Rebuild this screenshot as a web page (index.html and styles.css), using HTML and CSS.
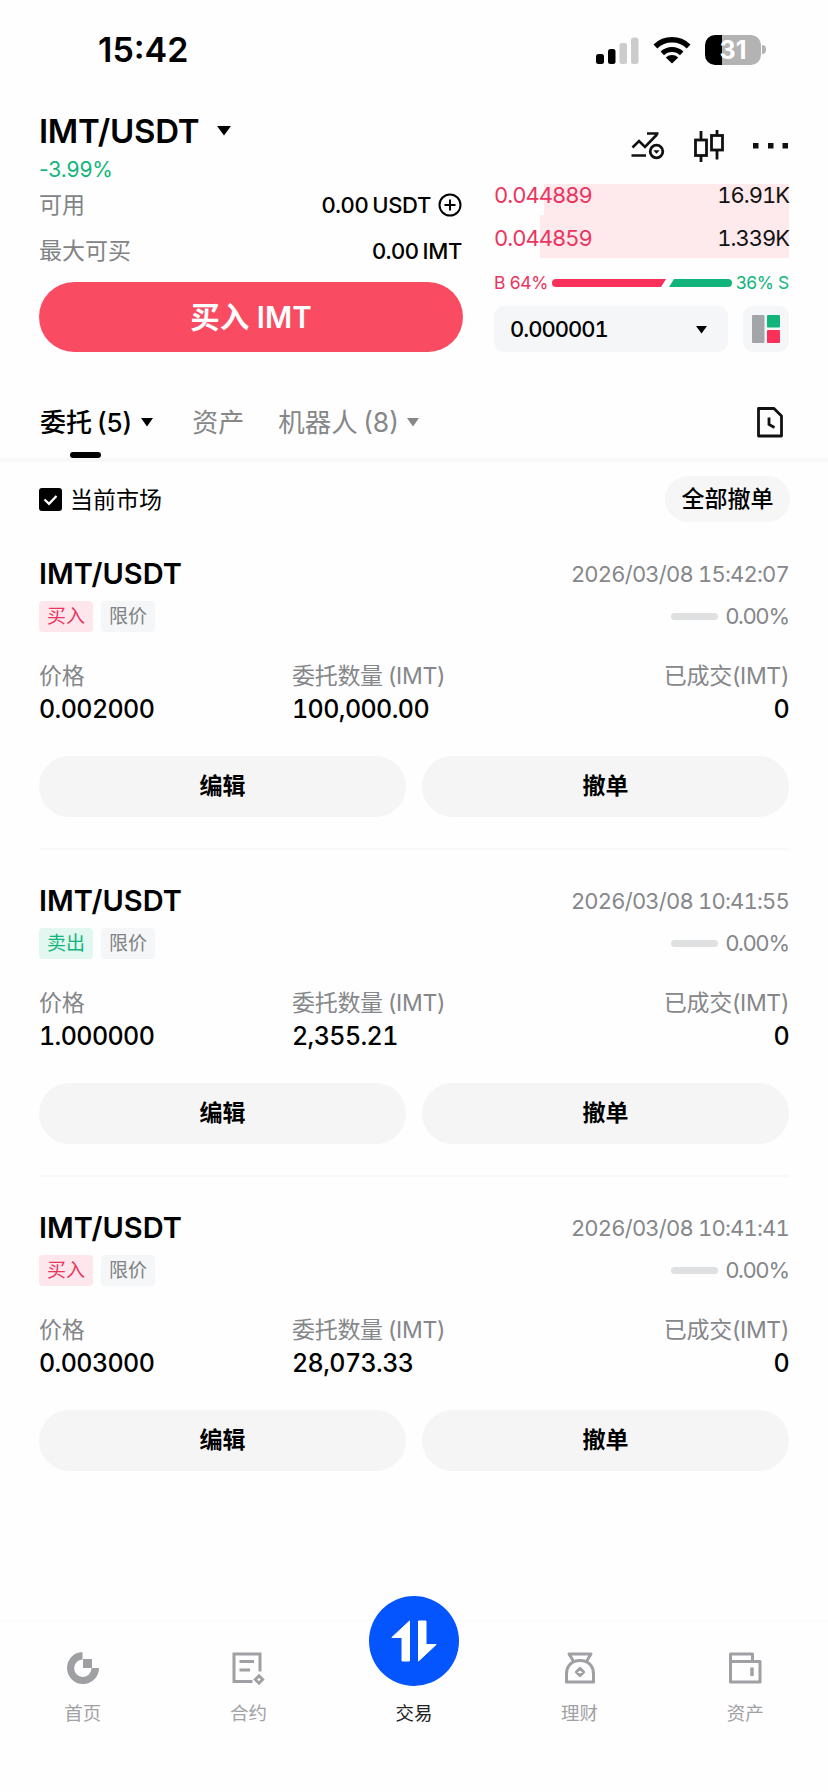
FILE: index.html
```html
<!DOCTYPE html>
<html lang="zh-CN">
<head>
<meta charset="utf-8">
<title>IMT/USDT</title>
<link rel="stylesheet" href="styles.css">
</head>
<body>
<div class="app">
  <header class="status">
    <span class="clock">15:42</span>
    <div class="status-icons">
      <svg width="43" height="28" viewBox="0 0 43 28"><rect x="0" y="18" width="8" height="10" rx="2.5"/><rect x="12" y="13" width="7.5" height="15" rx="2.5"/><g fill="#ccc"><rect x="23.500" y="7" width="7.500" height="21" rx="2.500"/><rect x="35" y="1.500" width="7.500" height="26.500" rx="2.500"/></g></svg>
      <svg class="wifi" width="38" height="28" viewBox="0 0 38 28"><path d="M19 27.500 12.800 21.400a9 9 0 0 1 12.400 0z"/><path d="M9.300 17.400a14 14 0 0 1 19.400 0" fill="none" stroke="#000" stroke-width="5"/><path d="M2.400 10.400a24 24 0 0 1 33.200 0" fill="none" stroke="#000" stroke-width="5.500"/></svg>
      <div class="battery"><span>31</span></div><i class="battery-tip"></i>
    </div>
  </header>

  <section class="head">
    <div class="head-left">
      <h1 class="pair">IMT/USDT<svg width="14" height="10" viewBox="0 0 14 10"><path d="M0 0H14L7 9.500z"/></svg></h1>
      <div class="change">-3.99%</div>
    </div>
    <div class="head-icons">
      <svg width="34" height="28" viewBox="0 0 34 28" fill="none" stroke="#111" stroke-width="2.600"><path d="M1.500 15.500 8 9l6 6L26 2.500M16 1.500H27.500M.5 23.500H15"/><circle cx="25.500" cy="19.500" r="6.300" stroke-width="2.800"/><path d="M22.300 18.200h6.400l-3.200 3.600z" fill="#111" stroke="none"/></svg>
      <svg class="candles" width="30" height="34" viewBox="0 0 30 34" fill="none" stroke="#111" stroke-width="2.800"><path d="M7 2v9M7 27v6M23 1v6M23 21v9.500"/><rect x="1.500" y="11" width="11" height="15.500"/><rect x="17.500" y="6.500" width="11" height="14.500"/></svg>
      <svg width="36" height="6" viewBox="0 0 36 6" fill="#111"><rect x="0" y="0" width="5.500" height="5.500"/><rect x="15" y="0" width="5.500" height="5.500"/><rect x="29.500" y="0" width="5.500" height="5.500"/></svg>
    </div>
  </section>

  <section class="trade">
    <div class="order-form">
      <div class="kv avail"><span>可用</span><b>0.00 USDT<svg width="24" height="24" viewBox="0 0 24 24" fill="none" stroke="#000" stroke-width="2"><circle cx="12" cy="12" r="10.500"/><path d="M12 6.500v11M6.500 12h11"/></svg></b></div>
      <div class="kv max"><span>最大可买</span><b>0.00 IMT</b></div>
      <button class="buy">买入 IMT</button>
    </div>
    <div class="book">
      <div class="ask ask-1"><span>0.044889</span><b>16.91K</b></div>
      <div class="ask ask-2"><span>0.044859</span><b>1.339K</b></div>
      <div class="ratio"><span class="red">B 64%</span><svg width="180" height="8" viewBox="0 0 180 8"><path fill="#f8305a" d="M4 0H114L109 8H4A4 4 0 0 1 4 0z"/><path fill="#11b57c" d="M122 0H176A4 4 0 0 1 176 8H117z"/></svg><span class="green">36% S</span></div>
      <div class="controls">
        <div class="step">0.000001<svg width="11" height="8" viewBox="0 0 11 8"><path d="M0 0H11L5.500 7.500z"/></svg></div>
        <div class="layout"><svg width="28" height="28" viewBox="0 0 28 28"><rect width="12.500" height="28" rx="1" fill="#a3a5a8"/><rect x="15" width="13" height="12.500" rx="1" fill="#11b57c"/><rect x="15" y="15" width="13" height="13" rx="1" fill="#f8305a"/></svg></div>
      </div>
    </div>
  </section>

  <nav class="tabs">
    <div class="tab active">委托 (5)<svg width="12" height="9" viewBox="0 0 12 9"><path d="M0 0H12L6 8.500z"/></svg></div>
    <div class="tab assets">资产</div>
    <div class="tab bots">机器人 (8)<svg width="12" height="9" viewBox="0 0 12 9"><path fill="#858789" d="M0 0H12L6 8.500z"/></svg></div>
    <svg class="history" width="26" height="31" viewBox="0 0 26 31" fill="none" stroke="#111" stroke-width="2.800"><path d="M1.500 1.500H17L24.500 9V29H1.500z" stroke-linejoin="round"/><path d="M12 10.500V17.500L17.500 20.500"/></svg>
  </nav>

  <div class="filter">
    <div class="check"><svg width="23" height="23" viewBox="0 0 23 23"><rect width="23" height="23" rx="3"/><path d="M5.500 11.500 10 15.800 17.500 8" fill="none" stroke="#fff" stroke-width="2.300"/></svg><span>当前市场</span></div>
    <button class="cancel-all">全部撤单</button>
  </div>

  <main>
    <article class="order">
      <div class="row top"><h2>IMT/USDT</h2><time>2026/03/08 15:42:07</time></div>
      <div class="row meta"><div class="tags"><span class="tag buy-tag">买入</span><span class="tag">限价</span></div><div class="progress"><i></i>0.00%</div></div>
      <div class="row stats"><div><span>价格</span><b>0.002000</b></div><div><span>委托数量 (IMT)</span><b>100,000.00</b></div><div><span>已成交(IMT)</span><b>0</b></div></div>
      <div class="row actions"><button>编辑</button><button>撤单</button></div>
    </article>
    <article class="order">
      <div class="row top"><h2>IMT/USDT</h2><time>2026/03/08 10:41:55</time></div>
      <div class="row meta"><div class="tags"><span class="tag sell-tag">卖出</span><span class="tag">限价</span></div><div class="progress"><i></i>0.00%</div></div>
      <div class="row stats"><div><span>价格</span><b>1.000000</b></div><div><span>委托数量 (IMT)</span><b>2,355.21</b></div><div><span>已成交(IMT)</span><b>0</b></div></div>
      <div class="row actions"><button>编辑</button><button>撤单</button></div>
    </article>
    <article class="order">
      <div class="row top"><h2>IMT/USDT</h2><time>2026/03/08 10:41:41</time></div>
      <div class="row meta"><div class="tags"><span class="tag buy-tag">买入</span><span class="tag">限价</span></div><div class="progress"><i></i>0.00%</div></div>
      <div class="row stats"><div><span>价格</span><b>0.003000</b></div><div><span>委托数量 (IMT)</span><b>28,073.33</b></div><div><span>已成交(IMT)</span><b>0</b></div></div>
      <div class="row actions"><button>编辑</button><button>撤单</button></div>
    </article>
  </main>

  <nav class="bottom">
    <div class="item"><svg width="34" height="34" viewBox="0 0 34 34"><path fill="#9fa0a3" d="M16.500 1V8.500A8.700 8.700 0 1 0 25.500 17H33A16 16 0 1 1 16.500 1z"/><rect x="17" y="8" width="9" height="9" fill="#9fa0a3"/></svg><span>首页</span></div>
    <div class="item"><svg width="34" height="34" viewBox="0 0 34 34" fill="none" stroke="#9fa0a3" stroke-width="3"><path d="M29 20.500V3H3V30.500H21.500M8.500 10.500H23M8.500 19H19"/><path d="M28 24.800 31.700 28.500 28 32.200 24.300 28.500z" stroke-width="2.800"/></svg><span>合约</span></div>
    <div class="item current"><div class="fab"><svg width="46" height="42" viewBox="0 0 46 42" fill="#fff" stroke="#fff" stroke-linejoin="round"><path d="M18.500 1V41H11V17.500H.800z"/><path d="M27.500 41V1H35V24.500H45.200z"/></svg></div><span>交易</span></div>
    <div class="item"><svg width="34" height="34" viewBox="0 0 34 34" fill="none" stroke="#9fa0a3" stroke-width="3" stroke-linejoin="round"><path d="M10 9.500 6 3H28L24 9.500M3.500 31V23C3.500 14.500 9 9.500 17 9.500S30.500 14.500 30.500 23V31z"/><path d="M17 17.300 20.700 21 17 24.700 13.300 21z" stroke-width="2.800"/></svg><span>理财</span></div>
    <div class="item"><svg width="34" height="34" viewBox="0 0 34 34" fill="none" stroke="#9fa0a3" stroke-width="3" stroke-linejoin="round"><path d="M2.500 10.500V3H24.500V10.500M2.500 10.500H32V31H2.500z"/><path d="M24 16.500V25" stroke-width="3.500"/></svg><span>资产</span></div>
  </nav>
</div>
</body>
</html>
```
FILE: styles.css
```css
* { box-sizing: border-box; margin: 0; padding: 0; }
body { background: #fefefe; font-family: Inter, "Noto Sans CJK SC", sans-serif; color: #000; }
svg { display: block; flex: none; }
button { border: 0; font-family: inherit; color: inherit; }
b { font-weight: 500; }
.app { width: 828px; height: 1792px; display: flex; flex-direction: column; overflow: hidden; }

.status { height: 99px; padding: 0 62px 0 98px; display: flex; justify-content: space-between; align-items: center; }
.clock { font-size: 34px; font-weight: 600; line-height: 40px; }
.status-icons { display: flex; align-items: center; }
.wifi { margin: 0 14px 0 14px; }
.battery { width: 56px; height: 30px; border-radius: 10px; background: linear-gradient(90deg, #000 17px, #b3b3b3 17px); display: flex; justify-content: center; align-items: center; color: #fff; font-size: 25px; font-weight: 700; line-height: 30px; }
.battery-tip { width: 4px; height: 9px; margin-left: 1px; border-radius: 0 5px 5px 0; background: #b3b3b3; }

.head { height: 85px; padding: 10px 39px 0 39px; display: flex; justify-content: space-between; }
.pair { display: flex; align-items: center; gap: 18px; height: 44px; font-size: 33px; font-weight: 600; line-height: 44px; letter-spacing: -0.3px; }
.change { height: 32px; font-size: 21px; line-height: 34px; letter-spacing: -0.1px; color: #11b57c; }
.head-icons { display: flex; align-items: center; gap: 29px; height: 74px; }

.trade { height: 198px; padding: 0 39px; display: flex; justify-content: space-between; }
.order-form { width: 424px; }
.kv { display: flex; justify-content: space-between; align-items: center; padding: 0 1px 0 0; font-size: 23px; color: #818386; }
.kv span { padding-bottom: 4px; }
.kv b { display: flex; align-items: center; gap: 7px; color: #000; font-size: 22px; letter-spacing: -0.35px; word-spacing: -1.5px; }
.avail { height: 41px; }
.max { height: 52px; }
.buy { display: block; width: 424px; height: 70px; margin-top: 5px; border-radius: 35px; background: #f94b61; color: #fff; font-size: 29.500px; font-weight: 600; line-height: 70px; }
.book { width: 295px; }
.ask { display: flex; justify-content: space-between; font-size: 22px; letter-spacing: -1px; font-feature-settings: "tnum"; color: #ea3560; }
.ask b { color: #111; font-weight: 400; }
.ask-1 { height: 31px; line-height: 22px; background: linear-gradient(90deg, transparent 50px, #fee9ed 50px); }
.ask-2 { height: 43px; line-height: 46px; background: linear-gradient(90deg, transparent 46px, #fee9ed 46px); }
.ratio { height: 49px; display: flex; align-items: center; justify-content: space-between; font-size: 17.500px; letter-spacing: -0.35px; }
.red { color: #ea3560; }
.green { color: #11b57c; }
.controls { display: flex; justify-content: space-between; margin-top: -1px; }
.step { width: 234px; height: 46px; padding: 0 21px 0 16px; border-radius: 10px; background: #f5f6f7; display: flex; justify-content: space-between; align-items: center; font-size: 22px; font-weight: 500; letter-spacing: -1px; font-feature-settings: "tnum"; }
.layout { width: 46px; height: 46px; border-radius: 10px; background: #f5f6f7; display: flex; align-items: center; justify-content: center; }
.step svg { margin-top: 1px; }

.tabs { height: 80px; padding: 0 45px 0 40px; display: flex; align-items: center; border-bottom: 4px solid #f8f8f8; font-size: 26px; color: #858789; }
.tab { display: flex; align-items: center; gap: 9px; height: 77px; position: relative; word-spacing: -2px; }
.tab svg { margin-top: 5px; }
.active { color: #000; font-weight: 500; }
.active::after { content: ""; position: absolute; left: 30px; bottom: 1px; width: 31px; height: 6px; border-radius: 3px; background: #000; }
.assets { margin-left: 39px; }
.bots { margin-left: 34px; font-size: 26.500px; gap: 8px; }
.history { margin: 5px 0 0 auto; }

.filter { height: 61px; padding: 14px 38px 0 39px; display: flex; align-items: flex-start; justify-content: space-between; font-size: 23px; }
.check { display: flex; align-items: center; gap: 8px; height: 46px; }
.check span { padding-bottom: 2px; }
.cancel-all { width: 125px; height: 46px; border-radius: 23px; background: #f6f6f6; font-size: 23px; font-weight: 500; line-height: 46px; }

.order { height: 327px; padding-top: 27px; margin: 0 39px; border-bottom: 2px solid #f8f8f8; }
.order:last-child { border-bottom: 0; }
.row { display: flex; justify-content: space-between; }
.top { height: 48px; line-height: 48px; align-items: center; }
.order h2 { font-size: 29px; font-weight: 600; }
.order time { font-size: 22px; letter-spacing: -0.8px; color: #85878a; font-feature-settings: "tnum"; }
.meta { height: 36px; align-items: center; }
.tags { display: flex; gap: 8px; }
.tag { width: 54px; height: 31px; border-radius: 4px; background: #f5f6f7; color: #808285; font-size: 19px; line-height: 31px; text-align: center; }
.buy-tag { background: #fee7ec; color: #ea3560; }
.sell-tag { background: #e2f7ef; color: #11b57c; }
.progress { display: flex; align-items: center; gap: 8px; font-size: 22px; letter-spacing: -1px; color: #85878a; }
.progress i { width: 47px; height: 7px; border-radius: 4px; background: #dfe0e1; }
.stats { height: 66px; margin-top: 26px; display: grid; grid-template-columns: 253px 1fr auto; }
.stats span { display: block; height: 32px; font-size: 23px; line-height: 32px; letter-spacing: -0.3px; word-spacing: -1px; color: #85878a; }
.stats b { display: block; height: 34px; font-size: 25px; line-height: 34px; letter-spacing: -0.6px; font-feature-settings: "tnum"; }
.stats div:last-child { text-align: right; }
.actions { margin-top: 30px; gap: 16px; }
.actions button { flex: 1; height: 61px; border-radius: 31px; background: #f5f5f5; font-size: 23px; font-weight: 700; line-height: 61px; }

.bottom { margin-top: auto; height: 172px; display: flex; border-top: 2px solid #fcfcfc; }
.item { flex: 1; height: 108px; padding-top: 29px; display: flex; flex-direction: column; align-items: center; justify-content: space-between; }
.item span { font-size: 18.500px; line-height: 34px; color: #a0a1a4; }
.item.current { padding-top: 0; }
.item.current span { color: #222; }
.fab { width: 90px; height: 90px; margin-top: -26px; border-radius: 50%; background: #0455fe; display: flex; align-items: center; justify-content: center; }
```
